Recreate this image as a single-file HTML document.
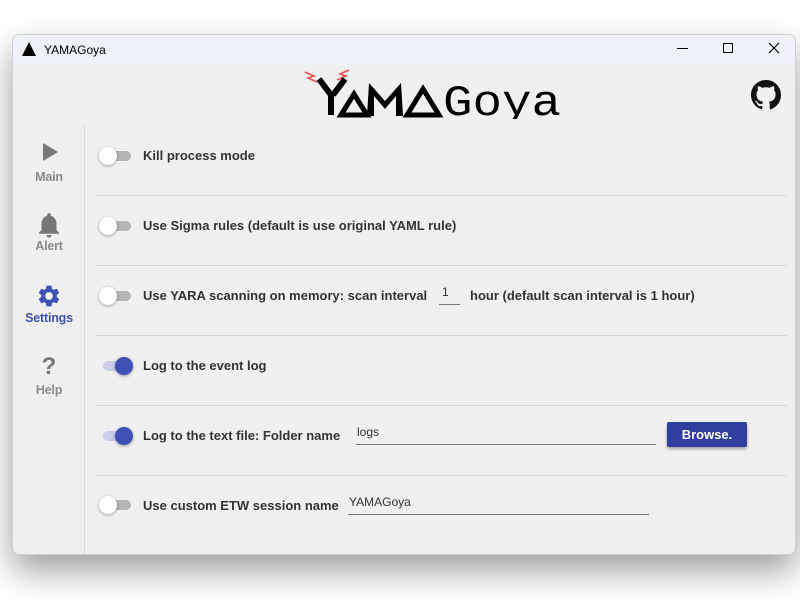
<!DOCTYPE html>
<html><head><meta charset="utf-8"><style>
*{margin:0;padding:0;box-sizing:border-box}
body{width:800px;height:600px;background:#fff;position:relative;overflow:hidden;font-family:"Liberation Sans",sans-serif;color:#333}
.win{position:absolute;left:12px;top:34px;width:784px;height:521px;background:#f0f0f0;border:1px solid #cfcfcf;border-radius:7px;box-shadow:0 16px 34px rgba(0,0,0,.38);overflow:hidden}
.tb{position:absolute;left:0;top:0;width:100%;height:30px;background:#eef2f9}
.abs{position:absolute}
.lbl{position:absolute;font-size:13px;font-weight:bold;color:#333;white-space:nowrap}
.hr{position:absolute;left:82px;width:692px;height:1px;background:#d6d6d6}
.tg{position:absolute;width:34px;height:20px}
.tg .tr{position:absolute;left:4px;top:5px;width:28px;height:10px;border-radius:5px;background:#b5b5b5}
.tg .k{position:absolute;left:0;top:1px;width:18px;height:18px;border-radius:50%;background:#fff;box-shadow:0 1px 3px rgba(0,0,0,.35)}
.tg.on .tr{background:#c9cde8}
.tg.on .k{left:16px;background:#3f51b5}
.nav{position:absolute;width:70px;text-align:center;font-size:12.5px;color:#8a8a8a;font-weight:bold;letter-spacing:-0.2px}
.inp{position:absolute;border-bottom:1px solid #7a7a7a;font-size:12px;color:#333;height:20px}
</style></head><body>
<div class="win">
<div class="tb">
<svg class="abs" style="left:8px;top:6px" width="16" height="16"><polygon points="8,1 15,15 1,15" fill="#000"/></svg>
<div class="abs" style="left:31px;top:8px;font-size:12px;color:#000">YAMAGoya</div>
<div class="abs" style="left:664px;top:13px;width:11px;height:1px;background:#000"></div>
<div class="abs" style="left:710px;top:8px;width:10px;height:10px;border:1px solid #000"></div>
<svg class="abs" style="left:755px;top:7px" width="12" height="12"><path d="M1 1L11 11M11 1L1 11" stroke="#000" stroke-width="1.2"/></svg>
</div>
<svg class="abs" style="left:288px;top:32px" width="270" height="52">
<path d="M4 5l9 4-6 2 9 4M48 3l-9 4 6 2-9 4" stroke="#f05050" stroke-width="1.6" fill="none"/>
<path d="M18 12l12 16v20M44 12l-12 16" stroke="#000" stroke-width="6" fill="none"/>
<polygon points="40,48 53,27 66,48" fill="none" stroke="#000" stroke-width="5"/>
<polygon points="66,49 68,16 84,34 100,16 102,49 95,49 95,29 84,42 73,29 73,49" fill="#000"/>
<polygon points="106,48 122,22 138,48" fill="none" stroke="#000" stroke-width="5"/>
<text x="142" y="48" font-family="Liberation Mono,monospace" font-size="44" fill="#000" textLength="118" lengthAdjust="spacingAndGlyphs">Goya</text>
</svg>
<svg class="abs" style="left:738px;top:45px" width="30" height="30" viewBox="0 0 16 16"><path fill="#111" d="M8 0C3.58 0 0 3.58 0 8c0 3.54 2.29 6.530 5.470 7.59.4.07.55-.17.55-.38v-1.33c-2.23.48-2.7-1.08-2.7-1.08-.36-.92-.89-1.170-.89-1.17-.73-.5.06-.49.06-.49.8.06 1.23.83 1.23.83.72 1.23 1.88.87 2.34.67.07-.52.28-.87.51-1.07-1.78-.2-3.65-.89-3.65-3.95 0-.87.31-1.59.82-2.15-.08-.2-.36-1.02.08-2.12 0 0 .67-.21 2.2.82a7.6 7.6 0 014 0c1.53-1.04 2.2-.82 2.2-.82.44 1.1.16 1.92.08 2.12.51.56.82 1.270.82 2.15 0 3.07-1.87 3.75-3.65 3.95.29.25.54.73.54 1.48v2.2c0 .21.15.46.55.38A8.01 8.01 0 0016 8c0-4.42-3.58-8-8-8z"/></svg>
<div class="abs" style="left:71px;top:90px;width:1px;height:431px;background:#dadada"></div>
<svg class="abs" style="left:28px;top:107px" width="18" height="20"><polygon points="2,1 17,10 2,19" fill="#777"/></svg>
<div class="nav" style="left:1px;top:135px">Main</div>
<svg class="abs" style="left:21px;top:175px" width="30" height="30" viewBox="0 0 24 24"><path fill="#777" d="M12 22c1.1 0 2-.9 2-2h-4c0 1.1.9 2 2 2zm6-6v-5c0-3.070-1.64-5.64-4.5-6.32V4c0-.83-.67-1.5-1.5-1.5s-1.5.67-1.5 1.5v.68C7.63 5.36 6 7.920 6 11v5l-2 2v1h16v-1l-2-2z"/></svg>
<div class="nav" style="left:1px;top:204px">Alert</div>
<svg class="abs" style="left:23px;top:248px" width="26" height="26" viewBox="0 0 24 24"><path fill="#3f51b5" d="M19.14 12.94c.04-.3.06-.61.06-.94 0-.32-.02-.64-.07-.94l2.03-1.58a.49.49 0 00.12-.61l-1.92-3.32a.49.49 0 00-.59-.22l-2.39.96c-.5-.38-1.03-.7-1.62-.94l-.36-2.54a.484.484 0 00-.48-.41h-3.84c-.24 0-.43.17-.47.41l-.36 2.54c-.59.24-1.13.57-1.62.94l-2.39-.96a.48.48 0 00-.59.22L2.74 8.87c-.12.21-.08.47.12.61l2.030 1.58c-.05.3-.09.63-.09.94s.02.64.07.94l-2.03 1.58a.49.49 0 00-.12.61l1.92 3.32c.12.22.37.29.59.22l2.39-.96c.5.38 1.03.7 1.62.94l.36 2.54c.05.24.24.41.48.41h3.84c.24 0 .44-.17.47-.41l.36-2.54c.59-.24 1.13-.56 1.62-.94l2.39.96c.22.08.47 0 .59-.22l1.92-3.32c.12-.22.07-.47-.12-.61l-2.01-1.58zM12 15.6A3.6 3.6 0 1112 8.4a3.6 3.6 0 010 7.2z"/></svg>
<div class="nav" style="left:1px;top:276px;color:#3f51b5">Settings</div>
<div class="abs" style="left:26px;top:318px;width:20px;text-align:center;font-size:24px;font-weight:bold;color:#777">?</div>
<div class="nav" style="left:1px;top:348px">Help</div>
<div class="tg" style="left:86px;top:111px"><div class="tr"></div><div class="k"></div></div>
<div class="lbl" style="left:130px;top:113px">Kill process mode</div>
<div class="hr" style="top:160px"></div>
<div class="tg" style="left:86px;top:181px"><div class="tr"></div><div class="k"></div></div>
<div class="lbl" style="left:130px;top:183px">Use Sigma rules (default is use original YAML rule)</div>
<div class="hr" style="top:230px"></div>
<div class="tg" style="left:86px;top:251px"><div class="tr"></div><div class="k"></div></div>
<div class="lbl" style="left:130px;top:253px">Use YARA scanning on memory: scan interval</div>
<div class="inp" style="left:426px;top:250px;width:21px;padding-left:3px">1</div>
<div class="lbl" style="left:457px;top:253px">hour (default scan interval is 1 hour)</div>
<div class="hr" style="top:300px"></div>
<div class="tg on" style="left:86px;top:321px"><div class="tr"></div><div class="k"></div></div>
<div class="lbl" style="left:130px;top:323px">Log to the event log</div>
<div class="hr" style="top:370px"></div>
<div class="tg on" style="left:86px;top:391px"><div class="tr"></div><div class="k"></div></div>
<div class="lbl" style="left:130px;top:393px">Log to the text file: Folder name</div>
<div class="inp" style="left:343px;top:390px;width:300px;padding-left:1px">logs</div>
<div class="abs" style="left:654px;top:387px;width:80px;height:25px;background:#303f9f;border-radius:2px;box-shadow:0 2px 3px rgba(0,0,0,.35);color:#fff;font-size:13px;font-weight:bold;text-align:center;line-height:25px">Browse.</div>
<div class="hr" style="top:440px"></div>
<div class="tg" style="left:86px;top:460px"><div class="tr"></div><div class="k"></div></div>
<div class="lbl" style="left:130px;top:463px">Use custom ETW session name</div>
<div class="inp" style="left:335px;top:460px;width:301px;padding-left:1px">YAMAGoya</div>
</div>
</body></html>
